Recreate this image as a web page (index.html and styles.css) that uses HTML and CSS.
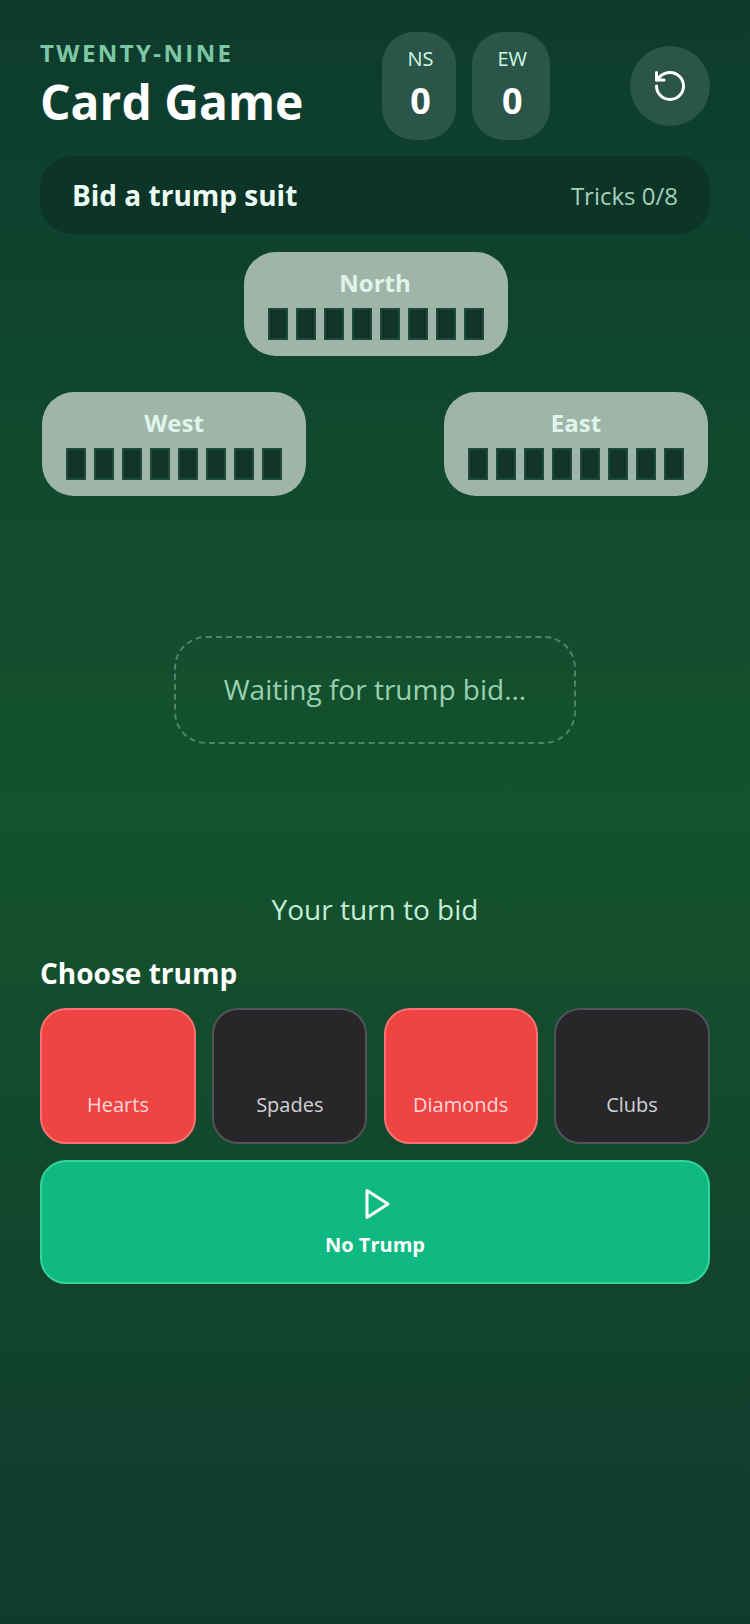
FILE: index.html

```html
<!DOCTYPE html>
<html lang="en">
<head>
    <meta charset="UTF-8">
    <meta name="viewport" content="width=device-width, initial-scale=1.0">
    <title>Twenty-Nine Card Game</title>
    <link rel="stylesheet" href="styles.css">
</head>
<body>
    <div class="app">
        <div class="header">
            <div class="title-block">
                <div class="eyebrow">TWENTY-NINE</div>
                <h1 class="title">Card Game</h1>
            </div>
            <div class="scores">
                <div class="score-card">
                    <span class="score-label">NS</span>
                    <span class="score-value">0</span>
                </div>
                <div class="score-card">
                    <span class="score-label">EW</span>
                    <span class="score-value">0</span>
                </div>
            </div>
            <button class="reset-btn">
                <svg width="36" height="36" viewBox="0 0 24 24" fill="none" stroke="currentColor" stroke-width="2" stroke-linecap="round" stroke-linejoin="round">
                    <path d="M3 12a9 9 0 1 0 9-9 9.75 9.75 0 0 0-6.74 2.74L3 8"/>
                    <path d="M3 3v5h5"/>
                </svg>
            </button>
        </div>

        <div class="status-bar">
            <span class="status-text">Bid a trump suit</span>
            <span class="tricks">Tricks 0/8</span>
        </div>

        <div class="table">
            <div class="player north">
                <div class="player-name">North</div>
                <div class="hand"><i></i><i></i><i></i><i></i><i></i><i></i><i></i><i></i></div>
            </div>
            <div class="side-players">
                <div class="player">
                    <div class="player-name">West</div>
                    <div class="hand"><i></i><i></i><i></i><i></i><i></i><i></i><i></i><i></i></div>
                </div>
                <div class="player">
                    <div class="player-name">East</div>
                    <div class="hand"><i></i><i></i><i></i><i></i><i></i><i></i><i></i><i></i></div>
                </div>
            </div>
            <div class="trick-area">Waiting for trump bid...</div>
        </div>

        <div class="turn-text">Your turn to bid</div>

        <h2 class="choose-title">Choose trump</h2>
        <div class="suits">
            <button class="suit-btn red">Hearts</button>
            <button class="suit-btn dark">Spades</button>
            <button class="suit-btn red">Diamonds</button>
            <button class="suit-btn dark">Clubs</button>
        </div>
        <button class="no-trump-btn">
            <svg width="36" height="36" viewBox="0 0 24 24" fill="none" stroke="currentColor" stroke-width="2" stroke-linecap="round" stroke-linejoin="round">
                <polygon points="6 3 20 12 6 21 6 3"/>
            </svg>
            <span>No Trump</span>
        </button>
    </div>
</body>
</html>
```

FILE: styles.css

```css
* {
    margin: 0;
    padding: 0;
    box-sizing: border-box;
}

body {
    width: 750px;
    height: 1624px;
    overflow: hidden;
    font-family: "Open Sans", sans-serif;
    color: white;
    background: linear-gradient(180deg, #0d3b2e 0%, #14532d 50%, #103a2e 100%);
}

button {
    font-family: inherit;
    color: white;
    cursor: pointer;
}

.app {
    padding: 32px 40px 0;
}

/* Header */
.header {
    display: flex;
    justify-content: space-between;
    align-items: center;
    height: 108px;
}

.eyebrow {
    font-size: 24px;
    line-height: 32px;
    font-weight: 700;
    letter-spacing: 2.4px;
    color: #7fc7a4;
    margin-top: -3px;
    margin-bottom: 3px;
}

.title {
    font-size: 48px;
    line-height: 60px;
    font-weight: 700;
}

.scores {
    display: flex;
    gap: 16px;
    margin-left: -1px;
}

.score-card {
    display: flex;
    flex-direction: column;
    align-items: center;
    padding: 13px 23px 0 25px;
    height: 108px;
    border-radius: 32px;
    background-color: #2b5548;
}

.score-label {
    font-size: 20px;
    line-height: 28px;
    color: #d1fae5;
}

.score-value {
    font-size: 36px;
    line-height: 56px;
    font-weight: 700;
}

.reset-btn {
    display: flex;
    align-items: center;
    justify-content: center;
    width: 80px;
    height: 80px;
    border: none;
    border-radius: 50%;
    background-color: #2b5548;
}

/* Status */
.status-bar {
    display: flex;
    justify-content: space-between;
    align-items: center;
    height: 78px;
    margin-top: 16px;
    padding: 0 32px;
    border-radius: 32px;
    background-color: #0c3527;
}

.status-text {
    font-size: 28px;
    font-weight: 700;
    color: #ecfdf5;
}

.tricks {
    font-size: 24px;
    color: #a5d0ba;
}

/* Table */
.table {
    display: flex;
    flex-direction: column;
    align-items: center;
    margin-top: 18px;
}

.player {
    width: 264px;
    height: 104px;
    padding-top: 15px;
    border-radius: 32px;
    background-color: #a0b5aa;
}

.player.north {
    margin-left: 2px;
}

.north .player-name {
    padding-right: 2px;
}

.player-name {
    font-size: 24px;
    line-height: 32px;
    font-weight: 700;
    text-align: center;
    color: #e0f5ea;
}

.hand {
    display: flex;
    justify-content: center;
    gap: 8px;
    margin-top: 9px;
}

.hand i {
    width: 20px;
    height: 32px;
    border: 2px solid #1d4a3a;
    background-color: #123428;
}

.side-players {
    display: flex;
    justify-content: space-between;
    width: 100%;
    margin-top: 36px;
    padding: 0 2px;
}

.trick-area {
    width: 402px;
    height: 108px;
    margin-top: 140px;
    padding-bottom: 2px;
    display: flex;
    align-items: center;
    justify-content: center;
    border: 2px dashed #4d8568;
    border-radius: 32px;
    font-size: 28px;
    color: #9ad0b0;
}

/* Bid panel */
.turn-text {
    margin-top: 145px;
    font-size: 28px;
    line-height: 40px;
    text-align: center;
    color: #c5ecd4;
}

.choose-title {
    margin-top: 24px;
    font-size: 28px;
    line-height: 40px;
    font-weight: 700;
}

.suits {
    display: grid;
    grid-template-columns: 156px 155px 154px 156px;
    justify-content: space-between;
    margin-top: 15px;
}

.suit-btn {
    display: flex;
    align-items: flex-end;
    justify-content: center;
    height: 136px;
    padding-bottom: 23px;
    border: 2px solid;
    border-radius: 26px;
    font-size: 20px;
    line-height: 28px;
    color: rgba(255, 255, 255, 0.8);
}

.suit-btn.red {
    background-color: #ef4444;
    border-color: #f87171;
}

.suit-btn.dark {
    background-color: #27272a;
    border-color: #52525b;
}

.no-trump-btn {
    display: flex;
    flex-direction: column;
    align-items: center;
    gap: 9px;
    width: 100%;
    height: 124px;
    margin-top: 16px;
    padding-top: 24px;
    border: 2px solid #34d399;
    border-radius: 26px;
    background-color: #10b981;
    font-size: 20px;
    line-height: 28px;
    font-weight: 700;
}

.no-trump-btn svg {
    margin-left: 2px;
}
```
